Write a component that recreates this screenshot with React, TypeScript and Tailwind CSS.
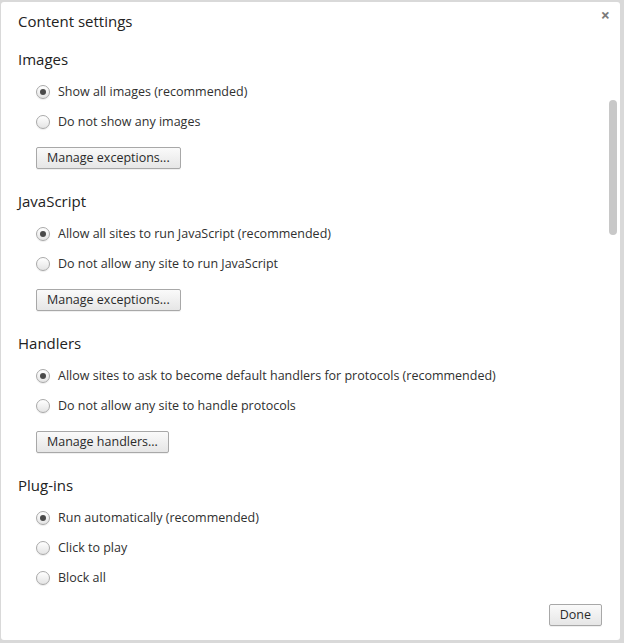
import React, { useState } from 'react';

type Section = {
  title: string;
  options: string[];
  button?: string;
};

const sections: Section[] = [
  { title: 'Images', options: ['Show all images (recommended)', 'Do not show any images'], button: 'Manage exceptions...' },
  { title: 'JavaScript', options: ['Allow all sites to run JavaScript (recommended)', 'Do not allow any site to run JavaScript'], button: 'Manage exceptions...' },
  { title: 'Handlers', options: ['Allow sites to ask to become default handlers for protocols (recommended)', 'Do not allow any site to handle protocols'], button: 'Manage handlers...' },
  { title: 'Plug-ins', options: ['Run automatically (recommended)', 'Click to play', 'Block all'] },
];

const Radio = ({ checked }: { checked: boolean }) => (
  <span className="w-[14px] h-[14px] rounded-full border border-[#a9a9a9] bg-gradient-to-b from-[#ffffff] to-[#e4e4e4] shadow-[0_1px_1px_rgba(0,0,0,0.08)] flex items-center justify-center shrink-0">
    {checked && <span className="w-[6px] h-[6px] rounded-full bg-[#4a4a4a]" />}
  </span>
);

const Button = ({ label }: { label: string }) => (
  <button className="h-[22px] px-[10px] rounded-[2px] border border-[#a8a8a8] bg-gradient-to-b from-[#fafafa] to-[#e6e6e6] text-[12.5px] text-[#2a2a2a] leading-none shadow-[0_1px_0_rgba(0,0,0,0.06)]">
    {label}
  </button>
);

export default function App() {
  const [selected, setSelected] = useState<Record<string, number>>({});

  return (
    <div className="w-[624px] h-[643px] bg-[#d9d9d9] pt-[2px] pl-px pr-[4px] pb-[3px]" style={{ fontFamily: '"Open Sans", "DejaVu Sans", sans-serif' }}>
      <div className="relative w-full h-full bg-white rounded-[3px] flex flex-col overflow-hidden">
        <div className="flex items-center justify-between pl-[17px] pr-[10px] h-[39px] pb-[1px]">
          <h1 className="text-[15px] text-[#222]">Content settings</h1>
          <button className="text-[#7a7a7a] text-[16px] font-bold leading-none -mt-[12px]">×</button>
        </div>

        <div className="flex-1 overflow-hidden pl-[17px]">
          {sections.map((s) => (
            <div key={s.title} className="mb-[14px]">
              <h2 className="text-[15px] text-[#222] h-[36px] flex items-center">{s.title}</h2>
              <div className="pl-[18px]">
                {s.options.map((o, i) => (
                  <label
                    key={o}
                    onClick={() => setSelected({ ...selected, [s.title]: i })}
                    className="flex items-center gap-[8px] h-[30px] text-[12.5px] text-[#303030] cursor-default"
                  >
                    <Radio checked={(selected[s.title] ?? 0) === i} />
                    <span>{o}</span>
                  </label>
                ))}
                {s.button && (
                  <div className="flex pt-[10px]">
                    <Button label={s.button} />
                  </div>
                )}
              </div>
            </div>
          ))}
        </div>

        <div className="flex justify-end pr-[18px] pb-[14px]">
          <Button label="Done" />
        </div>

        {/* overlay scrollbar */}
        <div className="absolute right-[3px] top-[98px] w-[8px] h-[135px] rounded-full bg-[#c8c8c8]" />
      </div>
    </div>
  );
}
